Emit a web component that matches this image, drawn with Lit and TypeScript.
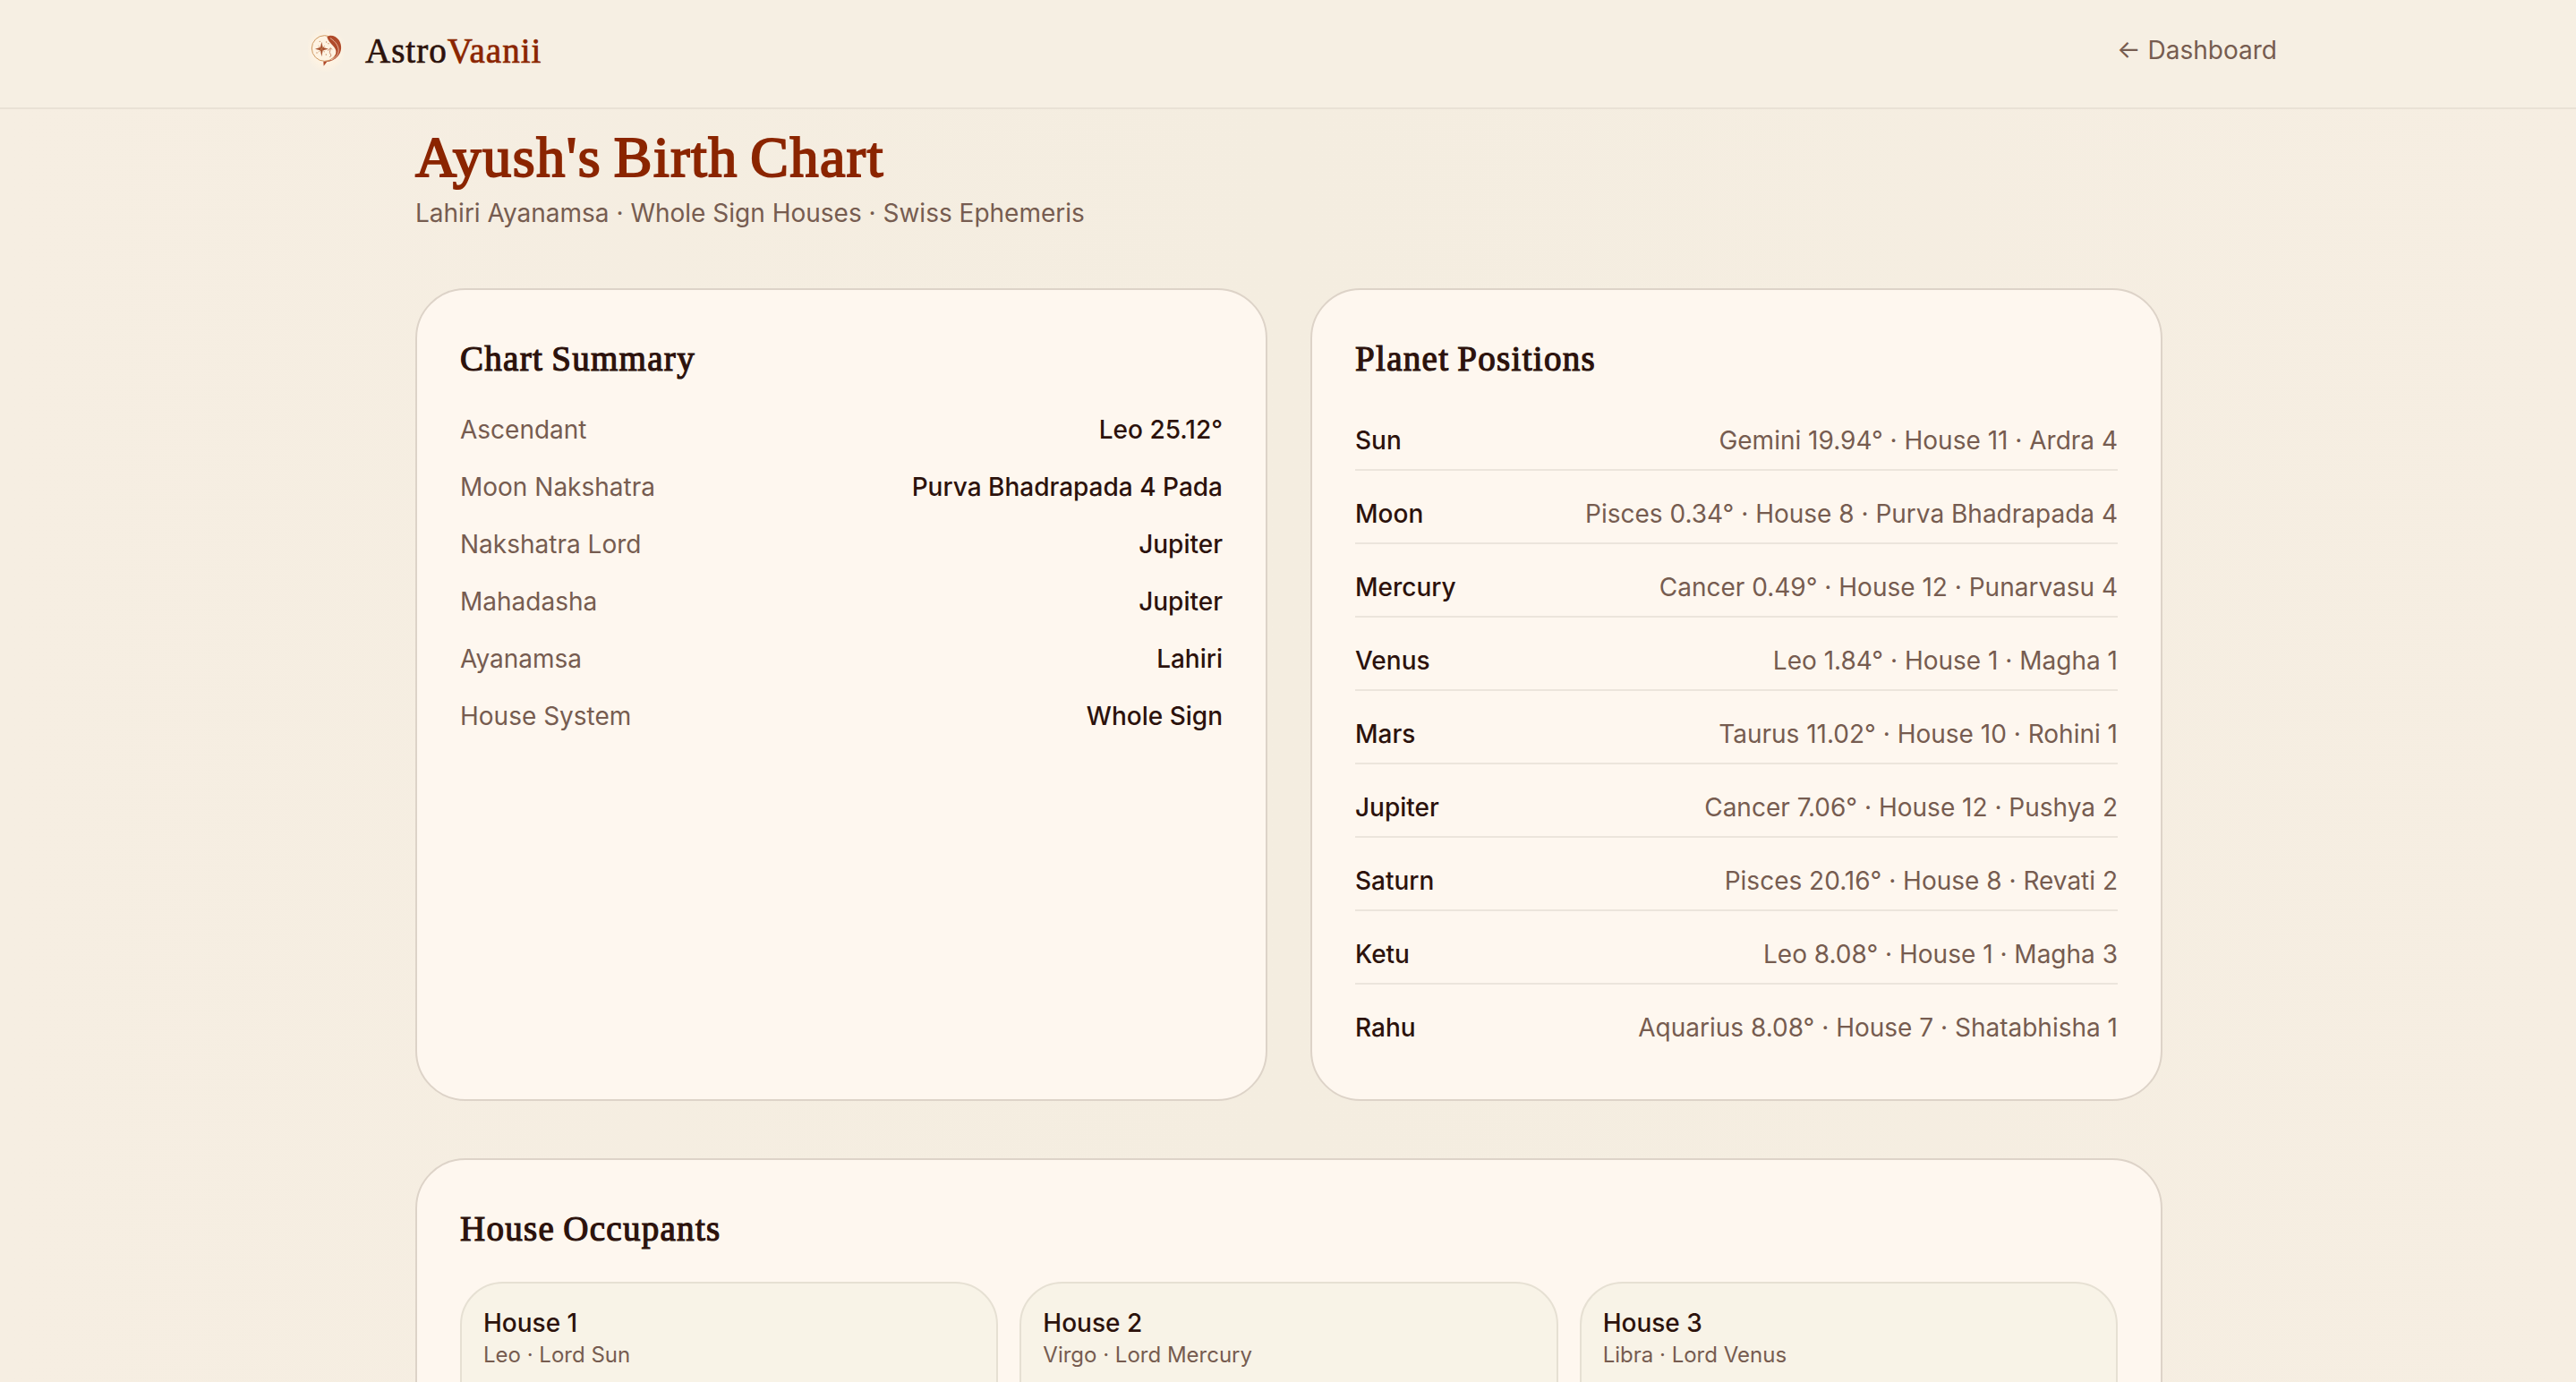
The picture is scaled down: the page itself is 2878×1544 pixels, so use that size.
import { css, html, LitElement, svg } from "lit";
import { customElement } from "lit/decorators.js";

const SUMMARY = [
  ["Ascendant", "Leo 25.12°"],
  ["Moon Nakshatra", "Purva Bhadrapada 4 Pada"],
  ["Nakshatra Lord", "Jupiter"],
  ["Mahadasha", "Jupiter"],
  ["Ayanamsa", "Lahiri"],
  ["House System", "Whole Sign"],
];

const PLANETS = [
  ["Sun", "Gemini 19.94° · House 11 · Ardra 4"],
  ["Moon", "Pisces 0.34° · House 8 · Purva Bhadrapada 4"],
  ["Mercury", "Cancer 0.49° · House 12 · Punarvasu 4"],
  ["Venus", "Leo 1.84° · House 1 · Magha 1"],
  ["Mars", "Taurus 11.02° · House 10 · Rohini 1"],
  ["Jupiter", "Cancer 7.06° · House 12 · Pushya 2"],
  ["Saturn", "Pisces 20.16° · House 8 · Revati 2"],
  ["Ketu", "Leo 8.08° · House 1 · Magha 3"],
  ["Rahu", "Aquarius 8.08° · House 7 · Shatabhisha 1"],
];

const HOUSES = [
  ["House 1", "Leo · Lord Sun"],
  ["House 2", "Virgo · Lord Mercury"],
  ["House 3", "Libra · Lord Venus"],
];

const logo = svg`
  <svg class="logo" viewBox="18 18 120 144">
    <defs>
      <radialGradient id="glow">
        <stop offset="0.6" stop-color="#fef3e2" />
        <stop offset="1" stop-color="#fef3e2" stop-opacity="0" />
      </radialGradient>
    </defs>
    <ellipse cx="78" cy="90" rx="68" ry="76" fill="url(#glow)" />
    <circle cx="74" cy="84" r="43" fill="none" stroke="#cf9a62" stroke-width="3" />
    <path
      d="M82 46C92 36 112 42 122 56C133 73 132 96 118 111C108 123 95 128 82 129L71 143L70 128C94 127 108 117 112 101C117 80 88 70 82 46Z"
      fill="#b04a2a"
    />
    <path
      d="M93 50C110 60 126 80 119 101C115 112 106 119 95 123"
      fill="none" stroke="#fbe6d3" stroke-width="2"
    />
    <path
      d="M64 62L68 80L87 86L68 91L64 112L60 91L42 86L60 80Z"
      fill="#a8522f"
    />
    <path
      d="M53 75L75 97M75 75L53 97"
      stroke="#c98358" stroke-width="2"
    />
    <path
      d="M84 92L94 83L99 88M94 83L91 98L96 108L91 114"
      fill="none" stroke="#c07a58" stroke-width="2.500"
    />
    <g fill="#c58a5c">
      <circle cx="58" cy="61" r="2" />
      <circle cx="80" cy="63" r="2" />
      <circle cx="87" cy="68" r="2" />
      <circle cx="48" cy="99" r="2" />
      <circle cx="79" cy="105" r="2" />
    </g>
  </svg>`;

@customElement("app-root")
export class AppRoot extends LitElement {
  protected render() {
    return html`
      <header>
        <div class="bar">
          <a class="brand">${logo}<span class="name">Astro<b>Vaanii</b></span></a>
          <a class="back">← Dashboard</a>
        </div>
      </header>
      <main>
        <h1>Ayush's Birth Chart</h1>
        <p class="subtitle">Lahiri Ayanamsa · Whole Sign Houses · Swiss Ephemeris</p>
        <div class="columns">
          <section class="card">
            <h2>Chart Summary</h2>
            <div class="summary">
              ${SUMMARY.map(
                ([label, value]) => html`
                  <div class="row"><span>${label}</span><strong>${value}</strong></div>
                `
              )}
            </div>
          </section>
          <section class="card">
            <h2>Planet Positions</h2>
            <div class="planets">
              ${PLANETS.map(
                ([planet, position]) => html`
                  <div class="row"><strong>${planet}</strong><span>${position}</span></div>
                `
              )}
            </div>
          </section>
        </div>
        <section class="card">
          <h2>House Occupants</h2>
          <div class="houses">
            ${HOUSES.map(
              ([house, lord]) => html`
                <div class="house"><strong>${house}</strong><small>${lord}</small></div>
              `
            )}
          </div>
        </section>
      </main>
    `;
  }

  static styles = css`
    :host {
      display: block;
      height: 1544px;
      overflow: hidden;
      background: linear-gradient(90deg, #f6eee2, #f4ede0 50%, #f6eee2);
      color: #2c120c;
      font: 28px/40px Inter, "Liberation Sans", sans-serif;
    }
    * {
      box-sizing: border-box;
    }
    header {
      height: 122px;
      border-bottom: 2px solid #e9e1d5;
      background: #f6efe3;
    }
    .bar {
      display: flex;
      align-items: center;
      justify-content: space-between;
      width: 2200px;
      height: 112px;
      margin-left: 344px;
    }
    .brand {
      display: flex;
      align-items: center;
      gap: 24px;
    }
    .logo {
      width: 40px;
      height: 48px;
    }
    .name,
    h1,
    h2 {
      font-family: "Liberation Serif", serif;
      font-weight: 400;
    }
    .name {
      padding-top: 2px;
      font-size: 39px;
      letter-spacing: 1px;
      -webkit-text-stroke: 0.7px;
    }
    .name b {
      color: #8b2500;
      font-weight: 400;
    }
    .back {
      color: #765c50;
    }
    main {
      width: 1952px;
      margin: 16px 0 0 464px;
    }
    h1 {
      height: 72px;
      margin: 0 0 8px;
      color: #8b2500;
      font-size: 64px;
      line-height: 75px;
      letter-spacing: 1.5px;
      word-spacing: -4px;
      -webkit-text-stroke: 2px;
    }
    .subtitle {
      margin: 0 0 64px;
      color: #765c50;
    }
    .columns {
      display: grid;
      grid-template-columns: 1fr 1fr;
      gap: 48px;
      margin-bottom: 64px;
    }
    .card {
      padding: 48px;
      border: 2px solid #ddd3c8;
      border-radius: 56px;
      background: #fef7ef;
    }
    h2 {
      height: 56px;
      margin: 0 0 32px;
      font-size: 39px;
      line-height: 58px;
      letter-spacing: 1.3px;
      word-spacing: -2px;
      -webkit-text-stroke: 1.2px;
    }
    .row {
      display: flex;
      justify-content: space-between;
    }
    .row span,
    small {
      color: #765c50;
    }
    strong {
      font-weight: 500;
    }
    .summary {
      display: grid;
      gap: 24px;
    }
    .planets {
      display: grid;
      gap: 16px;
    }
    .planets .row {
      padding: 12px 0;
      border-bottom: 2px solid #ece5dc;
    }
    .planets .row:last-child {
      border-bottom: 0;
    }
    .houses {
      display: grid;
      grid-template-columns: repeat(3, 1fr);
      gap: 24px;
    }
    .house {
      display: flex;
      flex-direction: column;
      height: 240px;
      padding: 24px;
      border: 2px solid #e6e0d3;
      border-radius: 48px;
      background: #f8f3e7;
    }
    small {
      font-size: 24px;
      line-height: 32px;
    }
  `;
}
